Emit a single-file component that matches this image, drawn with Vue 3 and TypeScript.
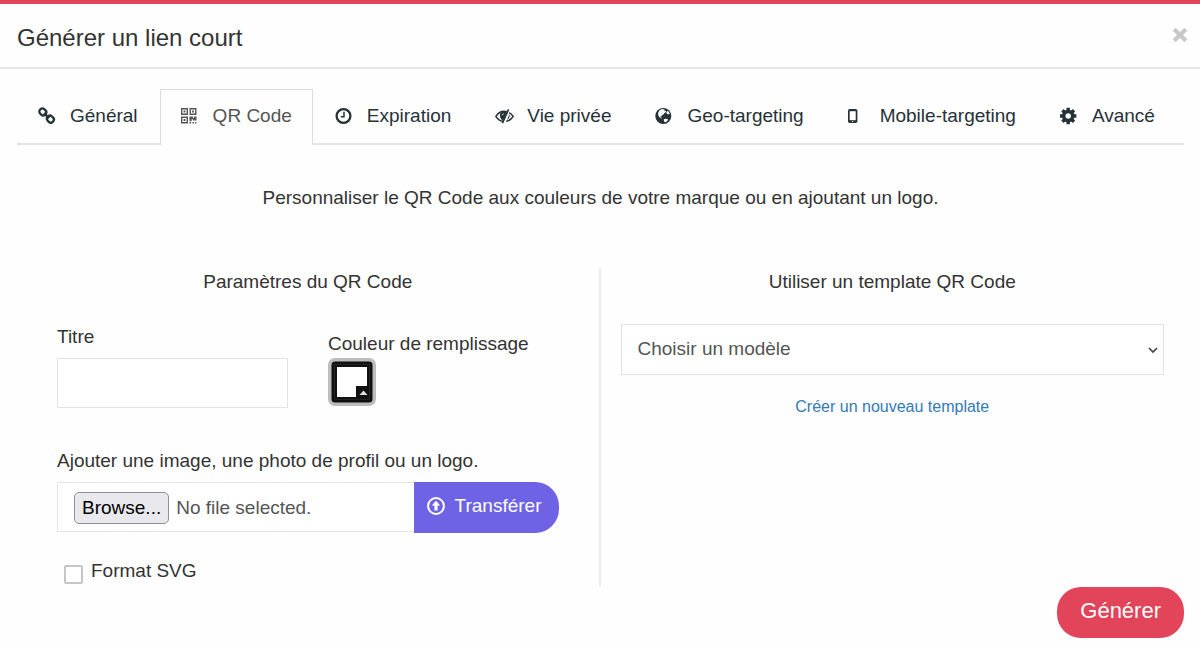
<script setup lang="ts">
import { ref } from 'vue'

interface Tab {
  id: string
  label: string
}

const tabs: Tab[] = [
  { id: 'general', label: 'Général' },
  { id: 'qr', label: 'QR Code' },
  { id: 'expiration', label: 'Expiration' },
  { id: 'privacy', label: 'Vie privée' },
  { id: 'geo', label: 'Geo-targeting' },
  { id: 'mobile', label: 'Mobile-targeting' },
  { id: 'advanced', label: 'Avancé' },
]

const active = ref<string>('qr')
const title = ref<string>('')
const color = ref<string>('#ffffff')
const svgFormat = ref<boolean>(false)
const template = ref<string>('')
const fileName = ref<string>('No file selected.')

function onFile(event: Event): void {
  const files = (event.target as HTMLInputElement).files
  fileName.value = files && files.length ? files[0].name : 'No file selected.'
}
</script>

<template>
  <form class="dialog" @submit.prevent>
    <header class="head">
      <h1>Générer un lien court</h1>
      <button type="button" class="close" aria-label="Fermer">
        <svg viewBox="0 0 16 16" width="16" height="16"><path d="M2.200 2.200l11.600 11.600M13.800 2.200l-11.600 11.600" stroke="#c8c8c8" stroke-width="4.200" /></svg>
      </button>
    </header>

    <main class="body">
      <nav class="tabs" role="tablist">
        <button
          v-for="tab in tabs"
          :key="tab.id"
          type="button"
          role="tab"
          :aria-selected="active === tab.id"
          :class="['tab', { active: active === tab.id }]"
          @click="active = tab.id"
        >
          <svg class="icon" viewBox="0 0 18 18" fill="none" aria-hidden="true">
            <g v-if="tab.id === 'general'" stroke="currentColor" stroke-width="2.3">
              <rect x="1.300" y="1.900" width="7" height="6" rx="2.700" transform="rotate(45 4.800 4.900)" />
              <rect x="8.900" y="9.200" width="7" height="6" rx="2.700" transform="rotate(45 12.400 12.200)" />
              <path d="M6 6.200l5.200 5" stroke-width="2.300" />
            </g>
            <g v-else-if="tab.id === 'qr'" stroke="currentColor" stroke-width="1.4">
              <path d="M.7 1.700h5.600v5.600H.7zM9.200 1.700h5.600v5.600H9.200zM.7 10.200h5.600v5.600H.7z" />
              <path d="M2.600 3.600h1.800v1.800H2.600zM11.100 3.600h1.800v1.800h-1.800zM2.600 12.100h1.800v1.800H2.600zM8.500 9.500h3.500v1.500h1V9.500h2.500v4h-3.500v-1.200h-1.400v2H8.500zM8.500 15h1.600v1.500H8.500zM11.500 15H13v1.500h-1.500zM14.100 15h1.400v1.500h-1.400z" fill="currentColor" stroke="none" />
            </g>
            <g v-else-if="tab.id === 'expiration'" stroke="currentColor">
              <circle cx="8.500" cy="9" r="6.900" stroke-width="2.3" />
              <path d="M9 4.800v4.900H5.800" stroke-width="1.5" />
            </g>
            <g v-else-if="tab.id === 'privacy'" stroke="currentColor">
              <path d="M8.2 14.400C4.900 14 2.500 12 .9 9.400 3 6 6 4.200 9.600 4.300c.8 0 1.500.1 2.200.3M14.200 5.700c1.700.9 3 2.200 4 3.700-1.500 2.500-3.900 4.400-7 4.900" stroke-width="1.5" />
              <path d="M13.600 2.300L7.400 16.200" stroke-width="1.6" />
              <path d="M5 7.300c.4-1.900 2-2.900 4.500-2.800l2.400.2-3.900 8.900C5.800 12.300 4.400 9.800 5 7.300zM14.600 7l-2.700 6c2.400-1.200 3.200-3.600 2.700-6z" fill="currentColor" stroke="none" />
              <path d="M7 8.400c.2-.9.8-1.500 1.800-1.700" stroke="#fff" stroke-width=".8" />
            </g>
            <g v-else-if="tab.id === 'geo'">
              <circle cx="8.300" cy="9" r="8" fill="currentColor" />
              <path d="M4.500 3.300L7 2l2.600.4-.6 1.200 1.500.2.800 1.400-1.700.6-.9 1.500-2 .9.300 1.100-1.500-.3.200 1.300 1.300.6-.3.600-1.900-.9-1.500-2-.2-2.600zM12.400 3.800l1.300.9L14.900 7l-1.500.3-1.300-.2-.7-1.300z M8.800 12.300l1.700-.5 2.500.5-.6 1.800-2 1.200-1.400-.9z" fill="#fff" />
            </g>
            <g v-else-if="tab.id === 'mobile'">
              <rect x="0" y="2" width="9.400" height="14" rx="1.800" fill="currentColor" />
              <path d="M1.700 4.200h6v9h-6z" fill="#fff" />
              <circle cx="4.700" cy="14.600" r=".7" fill="#fff" />
            </g>
            <g v-else stroke="currentColor">
              <circle cx="8.200" cy="9" r="4.500" stroke-width="3.6" />
              <path d="M8.200.8v3M8.200 14.200v3M0 9h3M13.400 9h3M2.400 3.200l2.100 2.100M11.900 12.700l2.100 2.100M14 3.200l-2.100 2.100M4.500 12.700l-2.100 2.100" stroke-width="3.4" />
            </g>
          </svg>
          <span>{{ tab.label }}</span>
        </button>
      </nav>

      <p class="intro">Personnaliser le QR Code aux couleurs de votre marque ou en ajoutant un logo.</p>

      <div class="columns">
        <section class="left">
          <h2>Paramètres du QR Code</h2>
          <div class="pair">
            <div class="field">
              <label for="title">Titre</label>
              <input id="title" v-model="title" class="text" type="text" />
            </div>
            <div class="field fill">
              <label for="color">Couleur de remplissage</label>
              <div class="swatch">
                <svg viewBox="0 0 48 48" width="48" height="48" aria-hidden="true">
                  <rect width="48" height="48" rx="7" fill="#bdbdbd" />
                  <rect x="3.500" y="3.500" width="41" height="41" rx="3.500" fill="#111" />
                  <rect x="6.500" y="6.500" width="35" height="35" fill="none" stroke="#222" />
                  <path d="M9 9h30v19H28v11H9z" :fill="color" />
                  <path d="M31.500 37l4-4.500 4 4.500z" fill="#ddd" />
                </svg>
                <input id="color" v-model="color" type="color" />
              </div>
            </div>
          </div>

          <label class="file-label" for="file">Ajouter une image, une photo de profil ou un logo.</label>
          <div class="upload">
            <div class="file">
              <span class="browse">Browse...</span>
              <span class="name">{{ fileName }}</span>
              <input id="file" type="file" @change="onFile" />
            </div>
            <button type="button" class="transfer">
              <svg viewBox="0 0 18 18" width="18" height="18" fill="none" aria-hidden="true">
                <circle cx="9" cy="9" r="7.900" stroke="#fff" stroke-width="2" />
                <path d="M9 3.800l4.200 4.700h-2.600v4.900H7.400V8.500H4.800z" fill="#fff" />
              </svg>
              <span>Transférer</span>
            </button>
          </div>

          <div class="check">
            <input id="svg" v-model="svgFormat" type="checkbox" />
            <label for="svg">Format SVG</label>
          </div>
        </section>

        <section class="right">
          <h2>Utiliser un template QR Code</h2>
          <div class="select">
            <select v-model="template" aria-label="Utiliser un template QR Code">
              <option value="">Choisir un modèle</option>
            </select>
            <svg viewBox="0 0 10 7" width="10" height="7" fill="none" aria-hidden="true"><path d="M1 1l4 4 4-4" stroke="#444" stroke-width="1.700" /></svg>
          </div>
          <a href="#">Créer un nouveau template</a>
        </section>
      </div>
    </main>

    <footer class="foot">
      <button type="submit" class="submit">Générer</button>
    </footer>
  </form>
</template>

<style>
body {
  margin: 0;
  background: #fefefe;
}
</style>

<style scoped>
.dialog,
.dialog * {
  box-sizing: border-box;
}
.dialog {
  border-top: 4px solid #e2445a;
  color: #333;
  font-family: "Liberation Sans", Arial, sans-serif;
  font-size: 19px;
  line-height: 26px;
}
button,
input,
select {
  font: inherit;
  color: inherit;
}
button {
  cursor: pointer;
}
.head {
  display: flex;
  align-items: center;
  justify-content: space-between;
  height: 65px;
  padding: 0 12px 0 17px;
  border-bottom: 2px solid #e8e8e8;
}
h1 {
  margin: 4px 0 0;
  font-size: 24px;
  font-weight: 400;
  line-height: 32px;
}
.close {
  display: flex;
  margin-bottom: 2px;
  padding: 0;
  border: 0;
  background: none;
}
.body {
  padding: 20px 16px 0 17px;
}
.tabs {
  display: flex;
  border-bottom: 2px solid #e5e5e5;
}
.tab {
  display: flex;
  align-items: center;
  gap: 14px;
  height: 56px;
  margin-bottom: -2px;
  padding: 0 21px 4px;
  border: 1px solid transparent;
  border-bottom: 0;
  background: none;
  color: #263238;
  white-space: nowrap;
}
.tab:first-child {
  padding-left: 20px;
}
.tab.active {
  padding-right: 20px;
  padding-left: 20px;
  border-color: #dcdcdc;
  background: #fefefe;
  color: #555;
}
.icon {
  width: 18px;
  height: 18px;
  overflow: visible;
}
.intro {
  margin: 40px 0 57px;
  text-align: center;
}
.columns {
  display: grid;
  grid-template-columns: 1fr 1fr;
}
h2 {
  margin: 0;
  padding-top: 1px;
  font-size: 19px;
  font-weight: 400;
  line-height: 26px;
  text-align: center;
}
.left {
  padding: 0 40px 3px;
  border-right: 2px solid #eee;
}
.right {
  display: flex;
  flex-direction: column;
  padding: 0 20px;
}
.pair {
  display: grid;
  grid-template-columns: 231px 1fr;
  gap: 40px;
  margin-top: 29px;
}
.field {
  display: flex;
  flex-direction: column;
  gap: 8px;
}
.field.fill {
  gap: 1px;
  padding-top: 7px;
}
.text {
  width: 100%;
  height: 50px;
  padding: 0 16px;
  border: 1px solid #e0e3e8;
  background: #fff;
}
.swatch {
  position: relative;
  width: 48px;
  height: 48px;
}
.swatch svg {
  display: block;
}
.swatch input,
.file input {
  position: absolute;
  inset: 0;
  width: 100%;
  height: 100%;
  opacity: 0;
  cursor: pointer;
}
.file-label {
  display: block;
  margin-top: 40px;
}
.upload {
  display: flex;
  margin-top: 8px;
}
.file {
  position: relative;
  display: flex;
  flex: 1;
  align-items: center;
  gap: 7px;
  height: 50px;
  padding: 1px 16px 0;
  border: 1px solid #e4e4e4;
  border-right: 0;
  background: #fff;
}
.browse {
  padding: 1px 7px;
  border: 1px solid #8f8f9d;
  border-radius: 5px;
  background: #e9e9ed;
  color: #000;
  line-height: 28px;
}
.name {
  color: #555;
}
.transfer {
  display: flex;
  align-items: center;
  gap: 10px;
  height: 51px;
  padding: 0 17px 4px 13px;
  border: 0;
  border-radius: 0 24px 24px 0;
  background: #6e62e5;
  color: #fff;
}
.check {
  display: flex;
  align-items: center;
  gap: 8px;
  margin: 25px 0 0 7px;
}
.check input {
  width: 19px;
  height: 19px;
  margin: 6px 0 0;
  border: 2px solid #c4c4c9;
  border-radius: 2px;
  background: #fff;
  appearance: none;
}
.check input:checked {
  background: #6e62e5;
}
.select {
  position: relative;
  margin-top: 29px;
}
.select select {
  display: block;
  width: 100%;
  height: 51px;
  padding: 0 40px 2px 16px;
  border: 1px solid #dfe3e8;
  border-radius: 0;
  background: #fff;
  color: #555;
  appearance: none;
}
.select svg {
  position: absolute;
  top: 23px;
  right: 6px;
  pointer-events: none;
}
.right a {
  align-self: center;
  margin-top: 19px;
  color: #337ab7;
  font-size: 16px;
  text-decoration: none;
}
.foot {
  display: flex;
  justify-content: flex-end;
  padding: 0 16px 0 17px;
}
.submit {
  height: 51px;
  padding: 0 23px 4px;
  border: 0;
  border-radius: 24px;
  background: #e2445a;
  color: #fff;
  font-size: 22px;
}
</style>
